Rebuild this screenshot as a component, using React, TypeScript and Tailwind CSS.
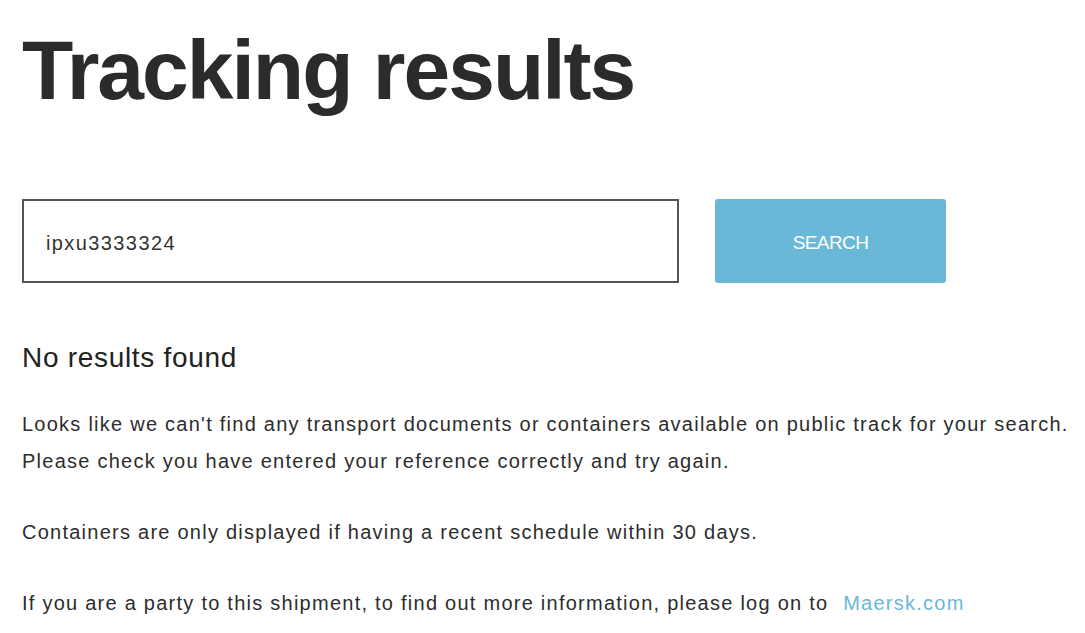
export default function App() {
  return (
    <div className="min-h-screen bg-white px-[22px] text-[#2d2d2d]" style={{ fontFamily: '"Liberation Sans", Arial, sans-serif' }}>
      <h1 className="pt-[22px] text-[84px] font-bold leading-[96px] tracking-[-2px] text-[#2b2b2b]">Tracking results</h1>

      <div className="mt-[81px] flex gap-[36px]">
        <div className="flex h-[84px] w-[657px] items-center border-2 border-[#555] px-[22px] pt-[4px] text-[20px] tracking-[1.4px] text-[#333]">
          ipxu3333324
        </div>
        <button className="h-[84px] w-[231px] rounded-[3px] bg-[#6ab8d8] pt-[4px] text-[19px] tracking-[-0.6px] text-white">
          SEARCH
        </button>
      </div>

      <h2 className="mt-[55px] text-[28px] leading-[40px] tracking-[0.7px] text-[#222]">No results found</h2>

      <div className="mt-[28px] whitespace-nowrap text-[20px] leading-[37px] tracking-[1.25px]">
        <p>
          Looks like we can't find any transport documents or containers available on public track for your search.
          <br />
          Please check you have entered your reference correctly and try again.
        </p>
        <p className="mt-[34px]">Containers are only displayed if having a recent schedule within 30 days.</p>
        <p className="mt-[34px]">
          If you are a party to this shipment, to find out more information, please log on to{" "}
          <a className="ml-[8px] text-[#6ab8d8]">Maersk.com</a>
        </p>
      </div>
    </div>
  );
}
